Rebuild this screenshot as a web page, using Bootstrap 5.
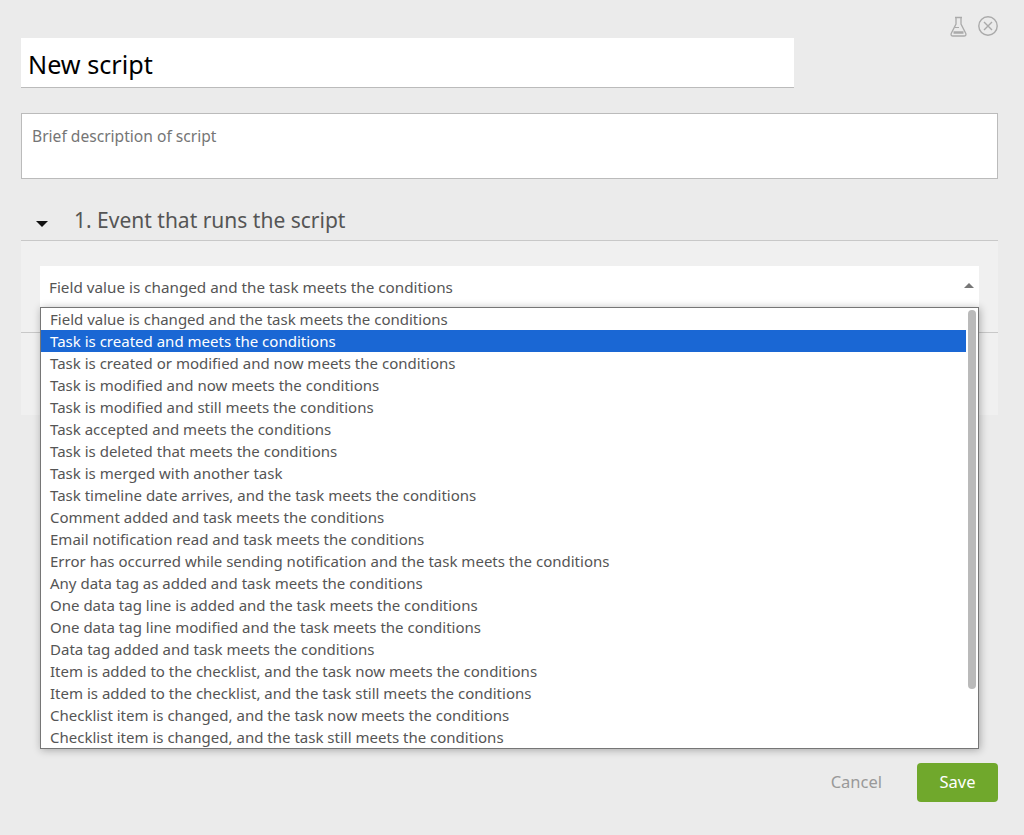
<!DOCTYPE html>
<html lang="en">
<head>
<meta charset="utf-8">
<title>New script</title>
<link href="https://cdn.jsdelivr.net/npm/bootstrap@5.3.0/dist/css/bootstrap.min.css" rel="stylesheet">
<style>
html,body{height:100%}
body{background:#ebebeb;font-family:"Noto Sans","Open Sans","Liberation Sans",sans-serif;color:#555;overflow:hidden}
.sheet{width:1024px;height:835px;padding:0 26px 0 21px;position:relative}
.topicons{height:38px;padding:16px 0 0 0;gap:11px}
.titlebox{width:773px;height:50px;background:#fff;border-bottom:1px solid #bbb;font-size:25.2px;color:#000;padding:0 7px;line-height:52px}
.descbox{margin-top:25px;height:66px;background:#fff;border:1px solid #bbb;padding:11px 10px;font-size:15.6px;color:#757575;line-height:22px}
.sectionhead{margin-top:25px;height:37px;border-bottom:1px solid #c8c8c8;font-size:21px;color:#555;line-height:29px}
.caretbox{width:53px;padding-left:15px}
.tri{width:0;height:0;border-left:6px solid transparent;border-right:6px solid transparent;border-top:6px solid #111;margin-top:3px}
.panel{background:#f0f0f0;height:174px;padding:25px 19px 0;position:relative}
.selectbox{height:42px;background:#fff;font-size:15.25px;padding:0 9px;line-height:43px}
.triup{width:0;height:0;border-left:5px solid transparent;border-right:5px solid transparent;border-bottom:5px solid #777;margin-top:-4px;margin-right:-4px}
.rule{position:absolute;left:0;right:0;top:91px;border-top:1px solid #c8c8c8}
.dropmenu{position:absolute;left:19px;right:19px;top:66px;height:442px;background:#fff;border:1px solid #767676;box-shadow:1px 1px 8px rgba(0,0,0,.3);padding-right:12px;z-index:5}
.opt{height:22px;line-height:23px;font-size:15.02px;padding-left:9px;color:#555;white-space:nowrap}
.opt-on{background:#1a67d4;color:#fff}
.thumb{position:absolute;right:2px;top:2px;width:8px;height:379px;background:#bababa;border-radius:4px}
.actions{position:absolute;right:26px;top:763px;gap:35px}
.cancel{font-size:16.5px;color:#999}
.savebtn{width:81px;height:39px;padding:0;background:#70a82c;border:0;border-radius:4px;color:#fff;font-size:16.5px}
</style>
</head>
<body>
<div class="sheet">
  <div class="topicons d-flex justify-content-end">
    <svg width="17" height="21" viewBox="0 0 17 21" fill="none" stroke="#aaa" stroke-width="1.3"><path d="M5 1.500h7M6 1.500v6.500L1.200 17.500q-.7 2.500 1.800 2.500h11q2.500 0 1.800-2.500L11 8V1.500"/><path d="M3.500 16.500h10" stroke-width="2.500"/><path d="M5 11.500h4" stroke-width="1"/></svg>
    <svg width="20" height="20" viewBox="0 0 20 20" fill="none" stroke="#aaa" stroke-width="1.4"><circle cx="10" cy="10" r="9.200"/><path d="M6 6l8 8M14 6l-8 8"/></svg>
  </div>
  <div class="titlebox">New script</div>
  <div class="descbox">Brief description of script</div>
  <div class="sectionhead d-flex align-items-center">
    <div class="caretbox"><div class="tri"></div></div>
    <div class="mb-1">1. Event that runs the script</div>
  </div>
  <div class="panel">
    <div class="rule"></div>
    <div class="selectbox d-flex justify-content-between align-items-center position-relative">
      <span>Field value is changed and the task meets the conditions</span>
      <span class="triup"></span>
    </div>
    <div class="dropmenu">
      <div class="opt">Field value is changed and the task meets the conditions</div>
      <div class="opt opt-on">Task is created and meets the conditions</div>
      <div class="opt">Task is created or modified and now meets the conditions</div>
      <div class="opt">Task is modified and now meets the conditions</div>
      <div class="opt">Task is modified and still meets the conditions</div>
      <div class="opt">Task accepted and meets the conditions</div>
      <div class="opt">Task is deleted that meets the conditions</div>
      <div class="opt">Task is merged with another task</div>
      <div class="opt">Task timeline date arrives, and the task meets the conditions</div>
      <div class="opt">Comment added and task meets the conditions</div>
      <div class="opt">Email notification read and task meets the conditions</div>
      <div class="opt">Error has occurred while sending notification and the task meets the conditions</div>
      <div class="opt">Any data tag as added and task meets the conditions</div>
      <div class="opt">One data tag line is added and the task meets the conditions</div>
      <div class="opt">One data tag line modified and the task meets the conditions</div>
      <div class="opt">Data tag added and task meets the conditions</div>
      <div class="opt">Item is added to the checklist, and the task now meets the conditions</div>
      <div class="opt">Item is added to the checklist, and the task still meets the conditions</div>
      <div class="opt">Checklist item is changed, and the task now meets the conditions</div>
      <div class="opt">Checklist item is changed, and the task still meets the conditions</div>
      <div class="thumb"></div>
    </div>
  </div>
  <div class="actions d-flex align-items-center">
    <span class="cancel">Cancel</span>
    <button type="button" class="btn savebtn">Save</button>
  </div>
</div>
<script src="https://cdn.jsdelivr.net/npm/bootstrap@5.3.0/dist/js/bootstrap.bundle.min.js"></script>
</body>
</html>
